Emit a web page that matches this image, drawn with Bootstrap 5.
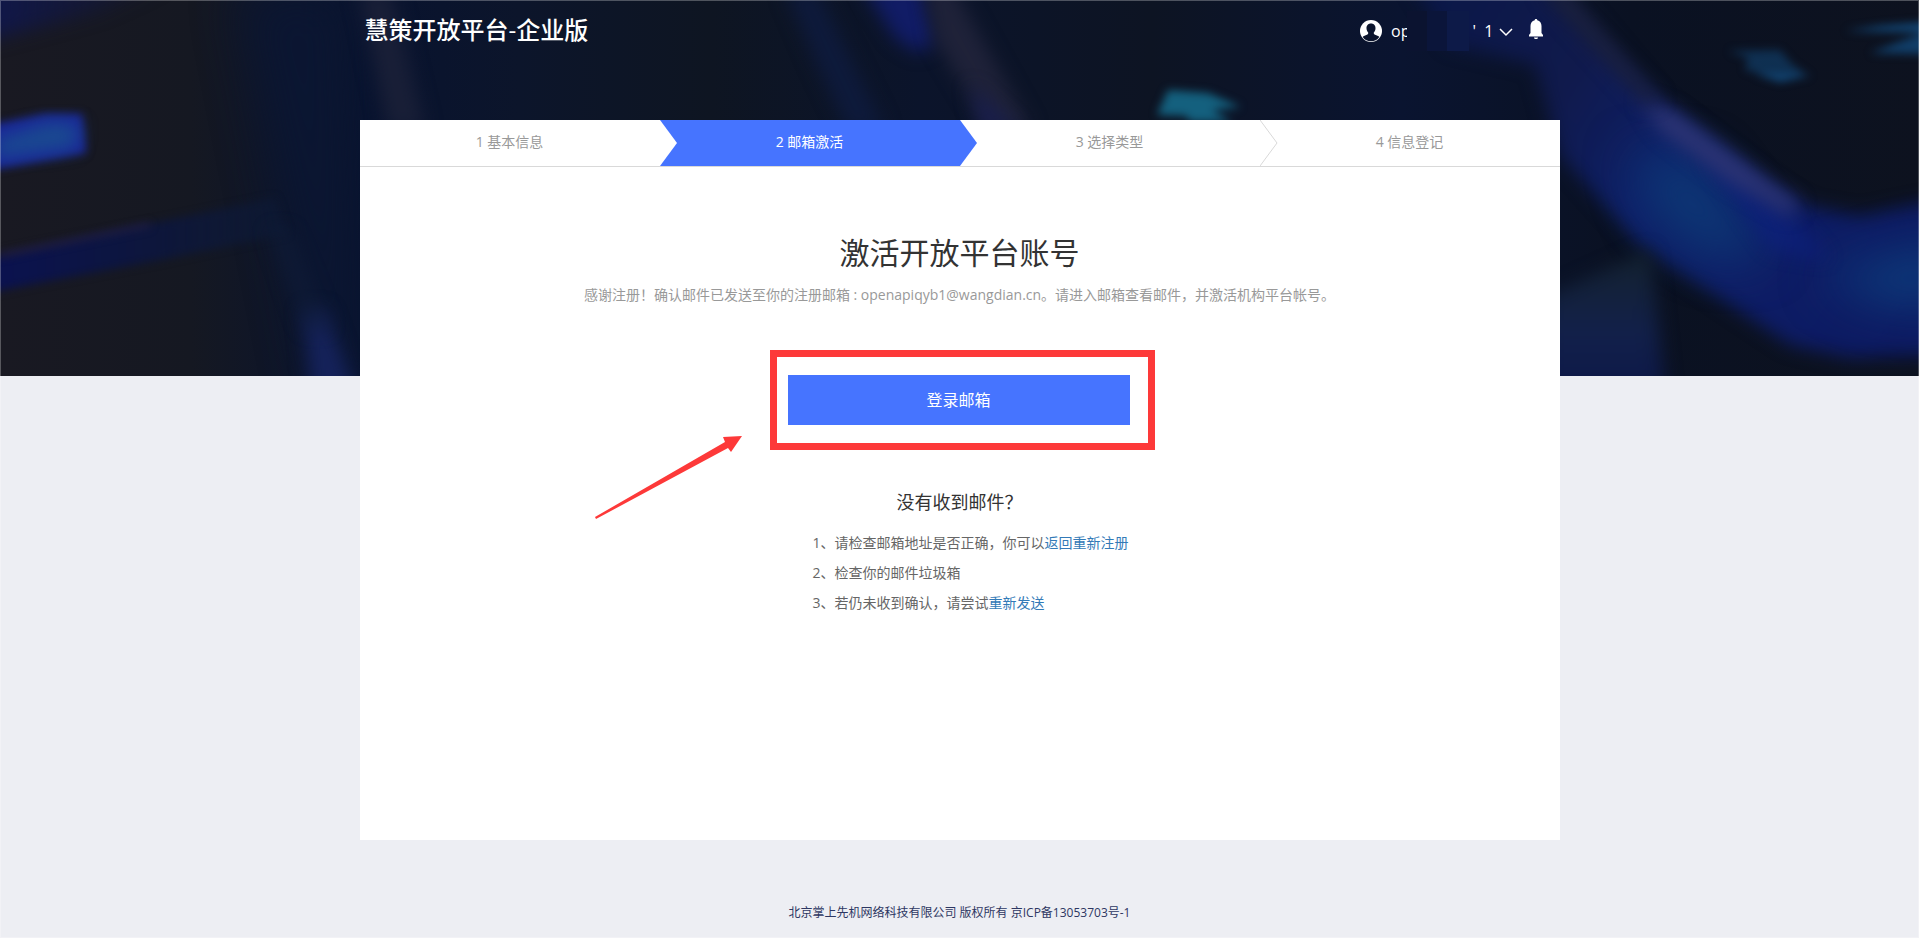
<!DOCTYPE html>
<html lang="zh-CN">
<head>
<meta charset="utf-8">
<meta name="viewport" content="width=device-width, initial-scale=1">
<title>慧策开放平台-企业版</title>
<link href="https://cdn.jsdelivr.net/npm/bootstrap@5.3.0/dist/css/bootstrap.min.css" rel="stylesheet">
<style>
  body { font-family: "Open Sans", "Noto Sans CJK SC", sans-serif; font-size: 14px; line-height: 20px; background: #edeef3; color: #333; }
  .page-edge { position: fixed; inset: 0; border: 1px solid rgba(255,255,255,.27); pointer-events: none; z-index: 10; }
  .hero-art { position: absolute; top: 0; left: 0; width: 100%; height: 376px; z-index: -1; }
  .hero-art filter { color-interpolation-filters: sRGB; }
  .page-width { max-width: 1200px; }
  .top-bar { height: 120px; padding: 12px 14px 0 5px; color: #fff; }
  .site-name { font-size: 24px; line-height: 36px; font-weight: 500; }
  .account { font-size: 16px; line-height: 24px; padding-top: 6px; }
  .account button { color: inherit; }
  .name-mask { position: relative; width: 62px; height: 40px; margin: -8px 4px -8px -4px; background: linear-gradient(90deg, #0b1330 20px, #0b153a 20px 40px, #0d1a48 40px); }
  .steps { border-bottom: 1px solid #d9d9d9; }
  .panel { min-height: 720px; }
  .step { position: relative; height: 46px; line-height: 44px; color: #999; }
  .step-tip { position: absolute; left: 100%; top: 0; width: 18px; height: 46px; z-index: 1; }
  .step-on { background: #4674ff; color: #fff; }
  .main-title { font-size: 30px; line-height: 40px; margin: 66px 0 12px; font-weight: 400; }
  .note { color: #999; margin-bottom: 45px; }
  .callout { position: relative; width: 385px; height: 100px; padding: 18px 18px 18px 11px; border: 7px solid #fd3939; margin-left: 410px; }
  .btn-mail { --bs-btn-bg: #4674ff; --bs-btn-color: #fff; --bs-btn-hover-bg: #3563ee; --bs-btn-hover-color: #fff; --bs-btn-border-width: 0; --bs-btn-border-radius: 0; height: 50px; font-size: 16px; }
  .pointer { position: absolute; right: 100%; top: 76px; width: 148px; height: 86px; margin-right: 35px; }
  .sub-title { font-size: 18px; line-height: 26px; margin: 39px 0 13px; font-weight: 400; }
  .tips { width: 342px; padding-left: 24px; line-height: 30px; color: #666; }
  .tips a { color: #337ab7; text-decoration: none; }
  .foot { font-size: 12px; color: #2d3762; padding: 63px 0 14px; }
</style>
</head>
<body>
<div class="page-edge"></div>
<svg class="hero-art" viewBox="0 0 1919 376" preserveAspectRatio="none" aria-hidden="true">
  <defs>
    <linearGradient id="base"><stop offset="0" stop-color="#191922"/><stop offset=".1" stop-color="#151822"/><stop offset=".19" stop-color="#08132f"/><stop offset=".27" stop-color="#0c152b"/><stop offset=".37" stop-color="#0e1522"/><stop offset=".48" stop-color="#0b142b"/><stop offset=".6" stop-color="#0d1423"/><stop offset=".73" stop-color="#0a1430"/><stop offset=".85" stop-color="#0a1122"/><stop offset="1" stop-color="#0d121f"/></linearGradient>
    <linearGradient id="fade"><stop offset="0" stop-color="#0b1250"/><stop offset=".55" stop-color="#0d163c"/><stop offset="1" stop-color="#0d1b38" stop-opacity=".5"/></linearGradient>
    <linearGradient id="corner"><stop offset="0" stop-color="#10174c"/><stop offset="1" stop-color="#10174c" stop-opacity="0"/></linearGradient>
    <linearGradient id="river" gradientUnits="userSpaceOnUse" x1="1400" y1="0" x2="1919" y2="330"><stop offset="0" stop-color="#0a1748"/><stop offset=".3" stop-color="#101a4c"/><stop offset=".5" stop-color="#0e1f68"/><stop offset="1" stop-color="#0d1a62"/></linearGradient>
    <linearGradient id="haze" x2="0" y2="1"><stop offset="0" stop-color="#14222e"/><stop offset=".6" stop-color="#12204a"/><stop offset="1" stop-color="#0d1848"/></linearGradient>
    <filter id="b3" x="-30%" y="-60%" width="160%" height="220%"><feGaussianBlur stdDeviation="4"/></filter>
    <filter id="b7" x="-60%" y="-40%" width="220%" height="180%"><feGaussianBlur stdDeviation="9"/></filter>
    <filter id="b20" x="-80%" y="-80%" width="260%" height="260%"><feGaussianBlur stdDeviation="24"/></filter>
  </defs>
  <path fill="url(#base)" d="M0 0H1919V376H0Z"/>
  <path fill="url(#corner)" filter="url(#b7)" d="M-20-20H180L100 12-20 42Z"/>
  <path fill="#0b1632" filter="url(#b20)" d="M240-10H345L360 390H320Z"/>
  <path fill="url(#fade)" filter="url(#b3)" d="M-8 258 130 228 275 198 288 234 160 260-8 292Z"/>
  <path stroke="#24204a" stroke-width="4" fill="none" filter="url(#b3)" d="M0 255 150 225"/>
  <path fill="#15225a" filter="url(#b7)" d="M303 310H325L358 400H312Z"/>
  <path fill="#101d3a" opacity=".6" filter="url(#b7)" d="M268 230H290L330 330H305Z"/>
  <path fill="#191f37" filter="url(#b7)" d="M358-10H392L425 130H388Z"/>
  <path fill="#1a2698" filter="url(#b3)" d="M-10 125 45 114 82 114 86 153-10 170Z"/>
  <path fill="#1a4a90" filter="url(#b7)" d="M-5 140 50 122 80 125 75 148-5 158Z"/>
  <path fill="#0e1a3b" filter="url(#b7)" d="M785-10H818L885 130H848L815 60Z"/>
  <path fill="#111c66" filter="url(#b7)" d="M862-15H922L936 42 918 53 895 38Z"/>
  <path fill="#1f2239" filter="url(#b7)" d="M925-15H952L1032 130H990L935 40Z"/>
  <path fill="#191e4c" filter="url(#b7)" d="M970 85 1020 130H980Z"/>
  <path fill="#14607e" filter="url(#b3)" d="M1168 90 1208 93 1241 107 1212 110 1232 122 1190 122 1186 116 1157 115Z"/>
  <path fill="url(#river)" filter="url(#b7)" d="M1410-20H1540L1665 105 1770 185 1810 207 1860 216 1940 200V355L1850 358 1790 345 1640 245 1560 155 1535 65 1450 45Z"/>
  <path fill="#0d3775" filter="url(#b20)" d="M1630 155 1700 160 1770 255 1720 260 1660 225Z"/>
  <path fill="#0d3a7a" filter="url(#b20)" d="M1820 275 1950 240V310L1870 300Z"/>
  <path fill="#0d2180" opacity=".6" filter="url(#b7)" d="M1700 150 1790 215 1830 260 1770 250Z"/>
  <path fill="#2c3474" filter="url(#b7)" d="M1640 98 1675 112 1800 204 1790 216 1730 182 1660 130Z"/>
  <path fill="#1b2140" filter="url(#b7)" d="M1540-10 1568-10 1660 100 1645 105Z"/>
  <path fill="url(#haze)" filter="url(#b7)" d="M1540 300 1650 250 1665 390H1540Z"/>
  <g filter="url(#b3)" fill="#12497a">
    <path d="M1728 51 1780 50 1792 64 1806 74 1780 78 1745 70 1748 58Z" opacity=".55"/>
    <path d="M1755 74 1812 75 1780 82Z"/>
    <path d="M1845 31 1880 26 1930 22V32Z"/>
    <path d="M1870 53 1930 30V54Z" opacity=".8"/>
  </g>
</svg>

<div class="page-width mx-auto">
  <header class="top-bar d-flex justify-content-between align-items-start">
    <div class="site-name">慧策开放平台-企业版</div>
    <div class="account d-flex align-items-center">
      <svg width="24" height="24" viewBox="0 0 24 24" class="me-2" aria-hidden="true"><circle cx="12" cy="12" r="11" fill="#fff"/><path fill="#0b142d" d="M12 4.500c3 0 4.700 2.200 4.500 5-.1 1.700-.8 3.100-1.700 4.100-.3 1.700.6 2 2.500 2.600 1.500.5 2.500 1 3 1.700A10.200 10.200 0 0 1 12 22.200 10.200 10.200 0 0 1 3.700 17.900c.5-.7 1.500-1.200 3-1.700 1.900-.6 2.800-.9 2.500-2.600-.9-1-1.600-2.400-1.700-4.100-.2-2.800 1.500-5 4.500-5Z"/></svg>
      <button type="button" class="btn border-0 p-0 rounded-0 d-flex align-items-center lh-base me-2">
        <span>op</span><span class="name-mask"></span><span>'&nbsp; 1</span>
        <svg width="24" height="24" viewBox="0 0 24 24" aria-hidden="true"><path d="M6 10l6 6 6-6" fill="none" stroke="#fff" stroke-width="1.500"/></svg>
      </button>
      <svg width="20" height="22" viewBox="0 0 20 22" class="mb-1" aria-hidden="true"><path fill="#fff" d="M10 1c.8 0 1.300.5 1.300 1.300C14 3 15.500 5 15.500 8v7l1.500 2v1.500H3V17l1.500-2V8c0-3 1.500-5 4.200-5.700C8.700 1.500 9.200 1 10 1ZM8 19.500h4c0 1-.8 1.500-2 1.500s-2-.5-2-1.500Z"/></svg>
    </div>
  </header>

  <main class="panel bg-white">
    <div class="steps row g-0 text-center">
      <div class="step col">1 基本信息
        <svg class="step-tip" viewBox="0 0 18 46" aria-hidden="true"><path fill="#fff" d="M0 0 17 23 0 46Z"/></svg>
      </div>
      <div class="step step-on col" aria-current="step">2 邮箱激活
        <svg class="step-tip" viewBox="0 0 18 46" aria-hidden="true"><path fill="#4674ff" d="M0 0 17 23 0 46Z"/></svg>
      </div>
      <div class="step col">3 选择类型
        <svg class="step-tip" viewBox="0 0 18 46" aria-hidden="true"><path fill="#fff" stroke="#d9d9d9" d="M0 0 17 23 0 46"/></svg>
      </div>
      <div class="step col">4 信息登记</div>
    </div>

    <h1 class="main-title text-center">激活开放平台账号</h1>
    <p class="note text-center">感谢注册！确认邮件已发送至你的注册邮箱 : openapiqyb1@wangdian.cn。请进入邮箱查看邮件，并激活机构平台帐号。</p>
    <div class="callout">
      <button type="button" class="btn btn-mail w-100">登录邮箱</button>
      <svg class="pointer" viewBox="0 0 148 86" aria-hidden="true"><path fill="#fd3939" d="M148 3 129 4 131 9 1 84 2 86 134 15 137 19Z"/></svg>
    </div>
    <h2 class="sub-title text-center">没有收到邮件？</h2>
    <div class="tips mx-auto">
      <div>1、请检查邮箱地址是否正确，你可以<a href="#">返回重新注册</a></div>
      <div>2、检查你的邮件垃圾箱</div>
      <div>3、若仍未收到确认，请尝试<a href="#">重新发送</a></div>
    </div>
  </main>
</div>
<footer class="foot text-center">北京掌上先机网络科技有限公司 版权所有 京ICP备13053703号-1</footer>
<script src="https://cdn.jsdelivr.net/npm/bootstrap@5.3.0/dist/js/bootstrap.bundle.min.js"></script>
</body>
</html>
